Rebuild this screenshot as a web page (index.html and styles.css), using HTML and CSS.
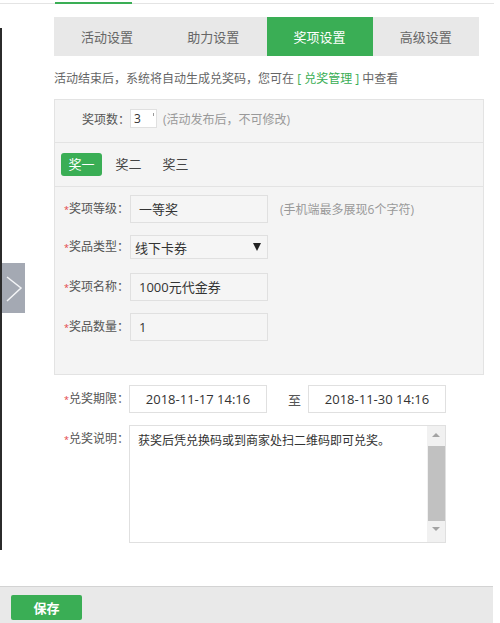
FILE: index.html
```html
<!DOCTYPE html>
<html lang="zh-CN">
<head>
    <meta charset="UTF-8">
    <title>奖项设置</title>
    <link rel="stylesheet" href="styles.css">
</head>
<body>
    <div class="page">
        <div class="topbar"><span class="topbar-active"></span></div>

        <div class="layout">
            <div class="edge"></div>
            <div class="content">
                <div class="tabs">
                    <div class="tab">活动设置</div>
                    <div class="tab">助力设置</div>
                    <div class="tab active">奖项设置</div>
                    <div class="tab">高级设置</div>
                </div>

                <p class="notice">活动结束后，系统将自动生成兑奖码，您可在 <a href="#">[ 兑奖管理 ]</a> 中查看</p>

                <div class="panel">
                    <div class="count-row">
                        <span class="count-label">奖项数：</span>
                        <span class="count-input">3<span class="spin"></span></span>
                        <span class="hint">(活动发布后，不可修改)</span>
                    </div>

                    <div class="prize-tabs">
                        <div class="prize-tab active">奖一</div>
                        <div class="prize-tab">奖二</div>
                        <div class="prize-tab">奖三</div>
                    </div>

                    <div class="fields">
                        <div class="field">
                            <span class="label"><i class="req">*</i>奖项等级：</span>
                            <span class="input">一等奖</span>
                            <span class="hint field-hint">(手机端最多展现6个字符)</span>
                        </div>
                        <div class="field">
                            <span class="label"><i class="req">*</i>奖品类型：</span>
                            <span class="select">线下卡券<span class="caret"></span></span>
                        </div>
                        <div class="field">
                            <span class="label"><i class="req">*</i>奖项名称：</span>
                            <span class="input">1000元代金券</span>
                        </div>
                        <div class="field">
                            <span class="label"><i class="req">*</i>奖品数量：</span>
                            <span class="input">1</span>
                        </div>
                    </div>
                </div>

                <div class="period">
                    <span class="label"><i class="req">*</i>兑奖期限：</span>
                    <span class="date">2018-11-17 14:16</span>
                    <span class="to">至</span>
                    <span class="date">2018-11-30 14:16</span>
                </div>

                <div class="desc">
                    <span class="label"><i class="req">*</i>兑奖说明：</span>
                    <div class="textarea">
                        <div class="textarea-text">获奖后凭兑换码或到商家处扫二维码即可兑奖。</div>
                        <div class="scrollbar">
                            <span class="arrow-up"></span>
                            <span class="thumb"></span>
                            <span class="arrow-down"></span>
                        </div>
                    </div>
                </div>
            </div>
        </div>

        <div class="footer">
            <button class="btn-save">保存</button>
        </div>

        <div class="side-toggle">
            <svg width="23" height="50" viewBox="0 0 23 50">
                <polyline points="5,14 19,25 5,38" fill="none" stroke="#f4f5f7" stroke-width="1.5"/>
            </svg>
        </div>
    </div>
</body>
</html>
```

FILE: styles.css
```css
* {
    margin: 0;
    padding: 0;
    box-sizing: border-box;
}

body {
    font-family: "Open Sans", "Noto Sans CJK SC", sans-serif;
    font-size: 12px;
    color: #333;
    background: #fff;
    width: 500px;
    height: 623px;
    overflow: hidden;
}

.page {
    width: 494px;
    position: relative;
}

.topbar {
    height: 4px;
    border-bottom: 1px solid #e4e4e4;
}

.topbar-active {
    display: block;
    width: 77px;
    height: 4px;
    margin-left: 55px;
    border-bottom: 2px solid #3aae55;
}

.layout {
    display: flex;
}

.edge {
    flex: none;
    width: 2px;
    height: 522px;
    margin-top: 24px;
    background: #2b2b2b;
}

.content {
    width: 484px;
    padding-left: 52px;
}

.tabs {
    display: flex;
    width: 425px;
    height: 39px;
    margin-top: 13px;
    background: #e8e8e8;
}

.tab {
    flex: 1;
    display: flex;
    align-items: center;
    justify-content: center;
    color: #666;
    font-size: 13px;
}

.tab.active {
    background: #3aae55;
    color: #fff;
}

.notice {
    margin-top: 13px;
    line-height: 20px;
    color: #666;
}

.notice a {
    color: #3aae55;
    text-decoration: none;
}

.panel {
    width: 430px;
    margin-top: 10px;
    padding-bottom: 21px;
    background: #f4f4f4;
    border: 1px solid #e3e3e3;
}

.count-row {
    display: flex;
    align-items: center;
    padding: 9px 0 14px 27px;
    border-bottom: 1px solid #e3e3e3;
}

.count-label {
    width: 48px;
    color: #555;
    white-space: nowrap;
}

.count-input {
    position: relative;
    width: 27px;
    height: 19px;
    line-height: 17px;
    padding-left: 3px;
    background: #fff;
    border: 1px solid #e0e0e0;
    color: #333;
}

.spin {
    position: absolute;
    right: 2px;
    top: 3px;
    width: 1px;
    height: 3px;
    background: #999;
}

.hint {
    color: #999;
    white-space: nowrap;
}

.count-row .hint {
    margin-left: 6px;
}

.prize-tabs {
    display: flex;
    gap: 6px;
    padding: 10px 6px;
    border-bottom: 1px solid #e3e3e3;
}

.prize-tab {
    width: 41px;
    height: 23px;
    line-height: 23px;
    text-align: center;
    border-radius: 3px;
    color: #444;
    font-size: 13px;
}

.prize-tab.active {
    background: #3aae55;
    color: #fff;
}

.fields {
    padding: 8px 0 0 9px;
}

.field {
    display: flex;
    align-items: center;
    height: 28px;
    margin-bottom: 12px;
}

.field:first-child {
    margin-bottom: 10px;
}

.label {
    flex: none;
    width: 66px;
    color: #555;
    line-height: 18px;
    white-space: nowrap;
}

.req {
    font-style: normal;
    color: #e2403f;
    font-size: 9px;
}

.input {
    width: 138px;
    height: 28px;
    line-height: 26px;
    padding-left: 8px;
    background: #f5f5f5;
    border: 1px solid #e0e0e0;
    font-size: 13px;
}

.field-hint {
    margin-left: 12px;
}

.select {
    display: flex;
    align-items: center;
    justify-content: space-between;
    width: 138px;
    height: 24px;
    padding: 0 6px 0 4px;
    background: #f5f5f5;
    border: 1px solid #e0e0e0;
    font-size: 13px;
}

.caret {
    width: 0;
    height: 0;
    border-left: 4px solid transparent;
    border-right: 4px solid transparent;
    border-top: 8px solid #222;
}

.period {
    display: flex;
    align-items: center;
    margin-top: 10px;
    padding-left: 10px;
}

.period .label {
    width: 65px;
}

.date {
    width: 138px;
    height: 28px;
    line-height: 26px;
    text-align: center;
    background: #fff;
    border: 1px solid #e0e0e0;
    font-size: 13px;
}

.to {
    width: 41px;
    padding-left: 21px;
    color: #555;
    font-size: 13px;
}

.desc {
    display: flex;
    align-items: flex-start;
    margin-top: 12px;
    padding-left: 10px;
}

.desc .label {
    width: 65px;
    padding-top: 5px;
}

.textarea {
    display: flex;
    width: 317px;
    height: 118px;
    border: 1px solid #e0e0e0;
    background: #fff;
}

.textarea-text {
    flex: 1;
    padding: 6px 8px;
    line-height: 18px;
    font-size: 12px;
}

.scrollbar {
    display: flex;
    flex-direction: column;
    align-items: center;
    width: 18px;
    background: #f1f1f1;
}

.arrow-up,
.arrow-down {
    width: 0;
    height: 0;
    border-left: 4px solid transparent;
    border-right: 4px solid transparent;
}

.arrow-up {
    margin: 7px 0 9px;
    border-bottom: 4px solid #a3a3a3;
}

.arrow-down {
    margin-top: 6px;
    border-top: 4px solid #a3a3a3;
}

.thumb {
    width: 17px;
    height: 75px;
    background: #c1c1c1;
}

.footer {
    width: 493px;
    height: 37px;
    margin-top: 36px;
    padding: 8px 11px;
    background: #e9e9e9;
    border-top: 1px solid #d3d3d3;
}

.btn-save {
    width: 71px;
    height: 25px;
    border: none;
    border-radius: 2px;
    background: #3aae55;
    color: #fff;
    font-family: "Open Sans", "Noto Sans CJK SC", sans-serif;
    font-size: 13px;
    font-weight: bold;
}

.side-toggle {
    position: absolute;
    left: 2px;
    top: 263px;
    width: 23px;
    height: 50px;
    background: #a4a9b3;
}

.side-toggle svg {
    display: block;
}
```
